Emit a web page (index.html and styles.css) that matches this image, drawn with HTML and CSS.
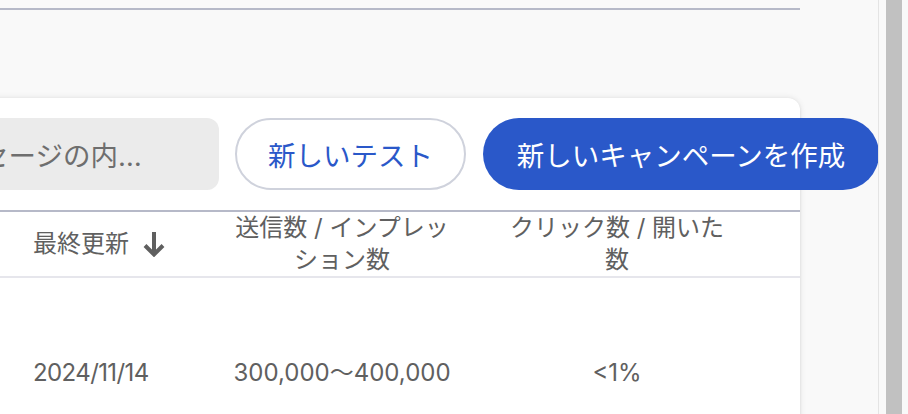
FILE: index.html
```html
<!DOCTYPE html>
<html lang="ja">
<head>
<meta charset="utf-8">
<title>キャンペーン</title>
<link rel="stylesheet" href="styles.css">
</head>
<body>
<div class="app">
  <main class="main">
    <div class="topbar"></div>
    <section class="card">
      <div class="toolbar">
        <div class="search"><span class="search-text">メッセージの内容で検索</span></div>
        <button class="btn btn-outline">新しいテスト</button>
        <button class="btn btn-primary">新しいキャンペーンを作成</button>
      </div>
      <div class="table">
        <div class="row head">
          <div class="cell c-name"></div>
          <div class="cell c-date">
            <span>最終更新</span>
            <svg class="sort-icon" width="22" height="25" viewBox="0 0 22 25" aria-hidden="true">
              <path d="M11 0 V22" fill="none" stroke="currentColor" stroke-width="4"/>
              <path d="M2 13.5 L11 22.5 L20 13.5" fill="none" stroke="currentColor" stroke-width="4"/>
            </svg>
          </div>
          <div class="cell c-num">送信数 / インプレッション数</div>
          <div class="cell c-num c-wide">クリック数 / 開いた数</div>
          <div class="cell c-end"></div>
        </div>
        <div class="row body">
          <div class="cell c-name"></div>
          <div class="cell c-date"><span class="date">2024/11/14</span></div>
          <div class="cell c-num">300,000〜400,000</div>
          <div class="cell c-num c-wide">&lt;1%</div>
          <div class="cell c-end"></div>
        </div>
      </div>
    </section>
  </main>
  <div class="gutter"><div class="thumb"></div></div>
</div>
</body>
</html>
```
FILE: styles.css
```css
* { box-sizing: border-box; }

html, body {
  margin: 0;
  padding: 0;
  height: 100%;
  overflow: hidden;
  background: #f9f9f9;
  font-family: Inter, "Noto Sans CJK JP", sans-serif;
}

.app {
  display: flex;
  height: 414px;
}

.main {
  width: 878px;
  flex: 0 0 878px;
  height: 414px;
  overflow: hidden;
  background: #f9f9f9;
}

.gutter {
  flex: 1 1 auto;
  border-left: 1px solid #e4e4e4;
  background: #f9f9f9;
  padding-left: 7px;
}

.thumb {
  width: 16px;
  height: 100%;
  background: #c1c1c1;
}

.topbar {
  height: 10px;
  width: 920px;
  margin-left: -120px;
  border-bottom: 2px solid #b6b9c8;
}

.card {
  margin-top: 88px;
  margin-left: -120px;
  width: 920px;
  background: #ffffff;
  border-radius: 12px;
  box-shadow: 0 0 6px rgba(0, 0, 0, 0.10), 0 1px 3px rgba(0, 0, 0, 0.08);
  padding-bottom: 60px;
}

.toolbar {
  display: flex;
  align-items: center;
  gap: 16px;
  padding: 20px 0 20px 24px;
  border-bottom: 2px solid #b6b9c8;
}

.search {
  flex: 0 0 315px;
  height: 72px;
  border-radius: 12px;
  background: #ebebeb;
  display: flex;
  align-items: center;
  padding: 0 59px 0 22px;
  overflow: hidden;
}

.search-text {
  display: block;
  width: 100%;
  white-space: nowrap;
  overflow: hidden;
  text-overflow: ellipsis;
  font-size: 27.5px;
  color: #6e6e6e;
}

.btn {
  flex: 0 0 auto;
  height: 72px;
  border-radius: 36px;
  font-family: inherit;
  font-size: 27.5px;
  padding: 0;
  cursor: pointer;
  text-align: center;
}

.btn-outline {
  width: 231px;
  background: #ffffff;
  border: 2px solid #cfd2dc;
  color: #2a58c9;
}

.btn-primary {
  width: 396px;
  margin-left: 1px;
  background: #2a58c9;
  border: none;
  color: #ffffff;
}

.row {
  display: grid;
  grid-template-columns: 137px 200px 250px 300px 33px;
  color: #606060;
  font-size: 24px;
  line-height: 32px;
}

.head {
  height: 66px;
  border-bottom: 2px solid #e6e6ec;
}

.cell {
  display: flex;
  align-items: center;
  justify-content: center;
  text-align: center;
  padding: 0 16px;
}

.c-wide {
  padding: 0 41px;
}

.c-date {
  justify-content: flex-start;
  text-align: left;
  gap: 14px;
}

.date {
  letter-spacing: -0.6px;
}

.sort-icon {
  color: #5f5f5f;
  flex: 0 0 auto;
  margin-top: 1px;
}

.body {
  padding-top: 79px;
  padding-bottom: 40px;
}
```
